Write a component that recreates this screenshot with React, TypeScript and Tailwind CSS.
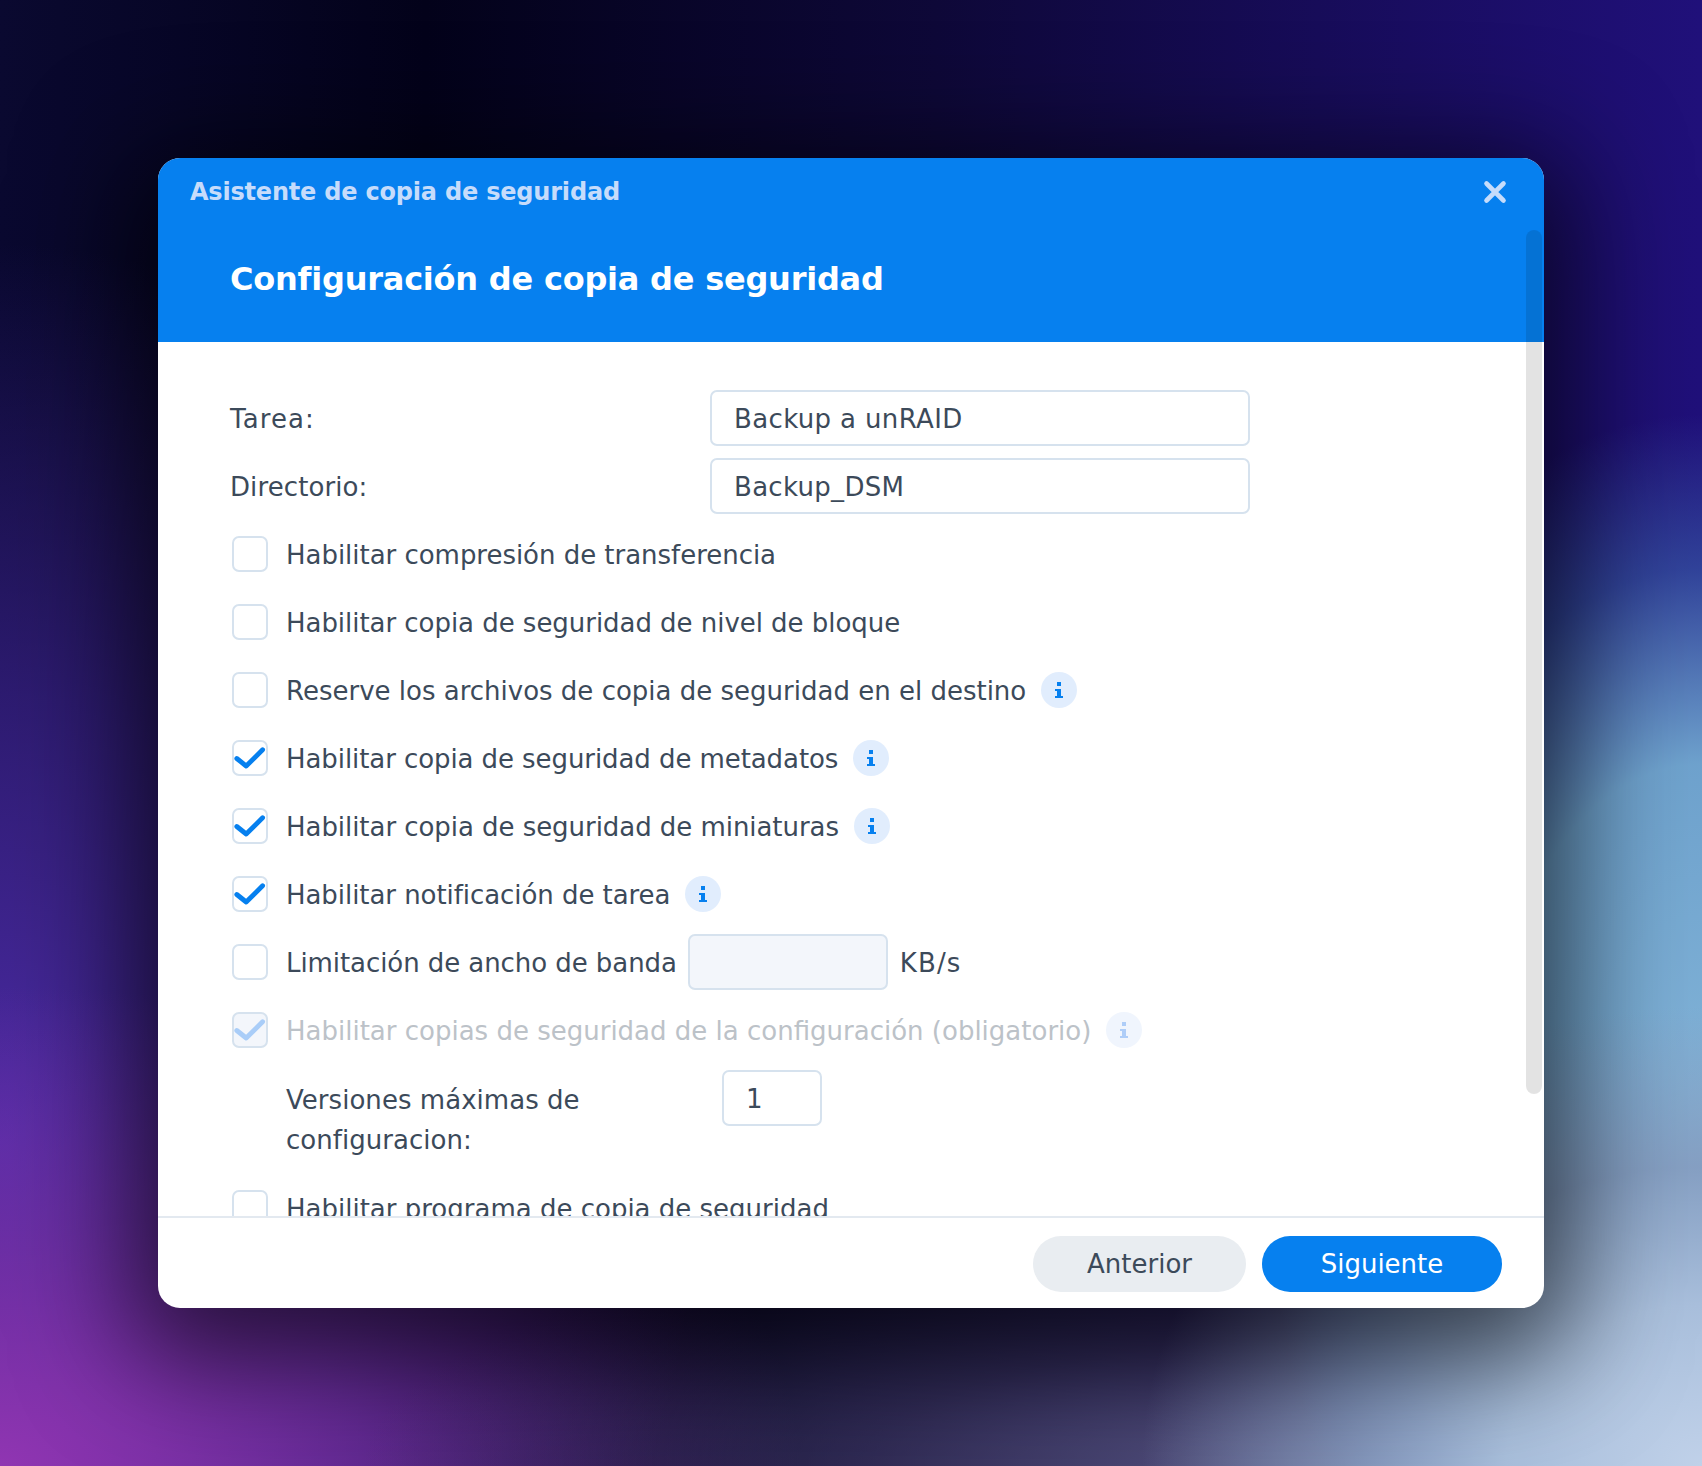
const rows = [
  { label: "Habilitar compresión de transferencia", checked: false, info: false, track: "tracking-[-0.03px]" },
  { label: "Habilitar copia de seguridad de nivel de bloque", checked: false, info: false, track: "tracking-[-0.04px]" },
  { label: "Reserve los archivos de copia de seguridad en el destino", checked: false, info: true, track: "" },
  { label: "Habilitar copia de seguridad de metadatos", checked: true, info: true, track: "tracking-[-0.08px]" },
  { label: "Habilitar copia de seguridad de miniaturas", checked: true, info: true, track: "tracking-[-0.05px]" },
  { label: "Habilitar notificación de tarea", checked: true, info: true, track: "tracking-[-0.06px]" },
];

const Checkbox = ({ checked, disabled }: { checked?: boolean; disabled?: boolean }) => (
  <span
    className={`mx-[2px] flex h-[36px] w-[36px] shrink-0 rounded-[7px] border-2 border-[#d6e2ee] ${
      disabled ? "bg-[#f3f6fb]" : "bg-white"
    }`}
  >
    {checked ? (
      <svg viewBox="0 0 36 36" className="-m-[2px] h-[36px] w-[36px]">
        <path
          d="M4.8 18.5 L14.2 26 L30.6 9.8"
          fill="none"
          stroke={disabled ? "#a9cdf8" : "#0680ef"}
          strokeWidth="4.8"
          strokeLinecap="round"
          strokeLinejoin="round"
        />
      </svg>
    ) : null}
  </span>
);

const Info = ({ disabled }: { disabled?: boolean }) => (
  <span
    className={`ml-[15px] flex h-[36px] w-[36px] shrink-0 rounded-full ${
      disabled ? "bg-[#f0f5fd]" : "bg-[#e1edfd]"
    }`}
  >
    <svg viewBox="0 0 36 36" className="h-[36px] w-[36px]" fill={disabled ? "#aecdf8" : "#0680ef"}>
      <rect x="16" y="10" width="4" height="4" />
      <rect x="14" y="17" width="6" height="2" />
      <rect x="16" y="17" width="4" height="9" />
      <rect x="14" y="24" width="8" height="2" />
    </svg>
  </span>
);

const TextBox = ({ value, className }: { value?: string; className: string }) => (
  <div
    className={`flex h-[56px] shrink-0 items-center rounded-[7px] border-2 border-[#d6e2ee] pt-[2px] pl-[22px] ${className}`}
  >
    {value}
  </div>
);

const App = () => {
  return (
    <div className="flex h-[1466px] w-[1702px] items-start justify-start overflow-hidden bg-[radial-gradient(ellipse_560px_460px_at_100%_100%,#c0d1e9_0%,#a9bfdc_35%,rgba(135,155,190,0.8)_65%,rgba(100,110,150,0)_100%),radial-gradient(ellipse_440px_700px_at_100%_76%,#82b4d8_0%,rgba(115,170,210,0.95)_50%,rgba(60,100,175,0.6)_78%,rgba(40,40,130,0)_100%),radial-gradient(ellipse_1000px_260px_at_80%_100%,rgba(95,95,135,0.95)_0%,rgba(70,65,105,0.6)_50%,rgba(40,30,70,0)_100%),radial-gradient(ellipse_800px_480px_at_0%_100%,#9035b2_0%,rgba(125,50,170,0.7)_45%,rgba(90,40,150,0)_100%),radial-gradient(ellipse_700px_900px_at_0%_78%,#4d2ca6_0%,rgba(60,35,140,0.7)_50%,rgba(30,15,90,0)_100%),linear-gradient(90deg,#0a0930_0%,#03021a_25%,#0e0838_55%,#20107a_100%)] [font-family:'DejaVu_Sans',sans-serif]">
      <div className="relative mt-[158px] ml-[158px] flex h-[1150px] w-[1386px] flex-col overflow-hidden rounded-[22px] bg-white text-[26px] text-[#3c4a5a] shadow-[0_24px_110px_30px_rgba(0,0,0,0.62)]">
        <header className="h-[184px] shrink-0 bg-[#0680ef]">
          <div className="flex items-center justify-between pt-[18px] pr-[37px] pl-[32px]">
            <span className="text-[24px] leading-[32px] font-bold tracking-[-0.2px] text-[#c6dcfb]">
              Asistente de copia de seguridad
            </span>
            <svg viewBox="0 0 24 24" className="h-[24px] w-[24px]">
              <path
                d="M3.5 3.5 L20.5 20.5 M20.5 3.5 L3.5 20.5"
                stroke="#c6dcfb"
                strokeWidth="4.6"
                strokeLinecap="round"
              />
            </svg>
          </div>
          <h1 className="mt-[49px] pl-[72px] text-[32px] leading-[44px] font-bold tracking-[-0.23px] text-white">
            Configuración de copia de seguridad
          </h1>
        </header>

        <div className="flex h-[874px] flex-col gap-[12px] overflow-hidden pt-[48px] pl-[72px]">
          <div className="flex items-center">
            <span className="w-[480px] pt-[2px] tracking-[1.1px]">Tarea:</span>
            <TextBox value="Backup a unRAID" className="w-[540px] tracking-[0.36px]" />
          </div>
          <div className="flex items-center">
            <span className="w-[480px] pt-[2px] tracking-[0.1px]">Directorio:</span>
            <TextBox value="Backup_DSM" className="w-[540px] tracking-[0.3px]" />
          </div>

          {rows.map((row) => (
            <div key={row.label} className="flex h-[56px] shrink-0 items-center">
              <Checkbox checked={row.checked} />
              <span className={`ml-[16px] pt-[2px] ${row.track}`}>{row.label}</span>
              {row.info ? <Info /> : null}
            </div>
          ))}

          <div className="flex h-[56px] shrink-0 items-center">
            <Checkbox />
            <span className="ml-[16px] pt-[2px] tracking-[-0.07px]">Limitación de ancho de banda</span>
            <div className="ml-[11px] h-[56px] w-[200px] rounded-[7px] border-2 border-[#d6e2ee] bg-[#f3f6fb]" />
            <span className="ml-[12px] pt-[2px] tracking-[1.1px]">KB/s</span>
          </div>

          <div className="flex h-[56px] shrink-0 items-center">
            <Checkbox checked disabled />
            <span className="ml-[16px] pt-[2px] text-[#bcc2c8]">
              Habilitar copias de seguridad de la configuración (obligatorio)
            </span>
            <Info disabled />
          </div>

          <div className="flex shrink-0 items-start pl-[56px]">
            <span className="w-[436px] pt-[10px] leading-[40px] tracking-[0.04px]">
              Versiones máximas de
              <br />
              configuracion:
            </span>
            <TextBox value="1" className="w-[100px]" />
          </div>

          <div className="mt-[8px] flex h-[56px] shrink-0 items-center">
            <Checkbox />
            <span className="ml-[16px] pt-[2px]">Habilitar programa de copia de seguridad</span>
          </div>
        </div>

        <footer className="flex h-[92px] shrink-0 justify-end gap-[16px] border-t-2 border-[#e3e9f0] pt-[18px] pr-[42px]">
          <button className="h-[56px] w-[213px] rounded-full bg-[#e9edf1] text-[#3c4a5a]">Anterior</button>
          <button className="h-[56px] w-[240px] rounded-full bg-[#0680ef] text-white">Siguiente</button>
        </footer>

        {/* overlay scrollbar */}
        <div className="absolute top-[72px] right-[2px] h-[864px] w-[16px] rounded-full bg-black/11" />
      </div>
    </div>
  );
};

export default App;
